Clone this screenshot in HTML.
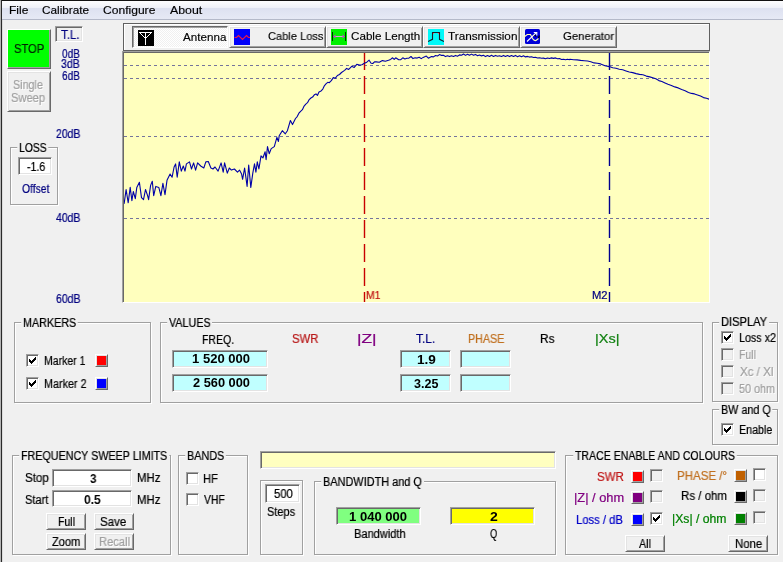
<!DOCTYPE html>
<html><head><meta charset="utf-8"><title>VNA</title>
<style>
html,body{margin:0;padding:0;}
body{width:783px;height:562px;overflow:hidden;background:#f0f0f0;position:relative;font-family:"Liberation Sans",sans-serif;font-size:12px;color:#000;}
.a{position:absolute;box-sizing:border-box;}
.t{will-change:transform;-webkit-text-stroke:0.22px;position:absolute;white-space:pre;line-height:1;transform-origin:0 50%;}
.cap{background:#f0f0f0;}
.dis{text-shadow:1px 1px 0 #fff;}
.raised{border:1px solid;border-color:#fff #696969 #696969 #fff;box-shadow:inset 1px 1px 0 #e3e3e3,inset -1px -1px 0 #a0a0a0;background:#f0f0f0;}
.sunken{border:1px solid;border-color:#a0a0a0 #fff #fff #a0a0a0;box-shadow:inset 1px 1px 0 #696969,inset -1px -1px 0 #e3e3e3;background:#fff;}
.thin-sunken{border:1px solid;border-color:#808080 #fff #fff #808080;}
.frame{border:1px solid #a0a0a0;box-shadow:1px 1px 0 #fff,inset 1px 1px 0 #fff;}
.cb{width:13px;height:13px;}
.cb.dis{background:#f0f0f0;}
.sw{width:13px;height:13px;border:1px solid;border-color:#fff #696969 #696969 #fff;box-shadow:inset 1px 1px 0 #e3e3e3,inset -1px -1px 0 #a0a0a0;}
</style></head><body>

<div class="a" style="left:0;top:0;width:783px;height:1px;background:#111"></div>
<div class="a" style="left:2px;top:1px;width:781px;height:18px;background:linear-gradient(#fdfdfe 0,#eff1f8 37%,#dde1f0 39%,#e6e9f5 100%)"></div>
<div class="a" style="left:2px;top:19px;width:781px;height:1px;background:#b4b9c9"></div>
<div class="a" style="left:0;top:0;width:1px;height:562px;background:#b4b4b4"></div>
<div class="a" style="left:1px;top:0;width:1px;height:562px;background:#2a2a2a"></div>
<div class="a" style="left:2px;top:20px;width:1px;height:542px;background:#dcdcdc"></div>
<div class="a raised" style="left:7px;top:29px;width:44px;height:40px;background:#00ff00;box-shadow:inset -1px -1px 0 #a0a0a0"></div>
<div class="a raised" style="left:7px;top:71px;width:44px;height:41px;"></div>
<div class="a sunken" style="left:55px;top:26px;width:28px;height:16px;background:#f0f0f0"></div>
<div class="a " style="left:123px;top:23px;width:587px;height:28px;border:1px solid #606060;box-shadow:inset 1px 1px 0 #fff;background:#f0f0f0"></div>
<div class="a " style="left:132px;top:26px;width:96px;height:22px;border:1px solid;border-color:#696969 #fff #fff #696969;box-shadow:inset 1px 1px 0 #a0a0a0;background:repeating-conic-gradient(#fff 0 25%,#f0f0f0 0 50%) 0 0/2px 2px"></div>
<div class="a raised" style="left:229px;top:26px;width:97px;height:22px;"></div>
<div class="a raised" style="left:326px;top:26px;width:97px;height:22px;"></div>
<div class="a raised" style="left:423px;top:26px;width:97px;height:22px;"></div>
<div class="a raised" style="left:520px;top:26px;width:97px;height:22px;"></div>
<svg class="a" style="left:138px;top:30px" width="16" height="16" viewBox="0 0 16 16" shape-rendering="crispEdges"><rect width="16" height="16" fill="#000"/><g fill="#fff"><rect x="1" y="2" width="13" height="1"/><rect x="7" y="2" width="1" height="13"/><rect x="1" y="2" width="1" height="1"/><rect x="13" y="2" width="1" height="1"/><rect x="2" y="3" width="1" height="1"/><rect x="12" y="3" width="1" height="1"/><rect x="3" y="4" width="1" height="1"/><rect x="11" y="4" width="1" height="1"/><rect x="4" y="5" width="1" height="1"/><rect x="10" y="5" width="1" height="1"/><rect x="5" y="6" width="1" height="1"/><rect x="9" y="6" width="1" height="1"/><rect x="6" y="7" width="1" height="1"/><rect x="8" y="7" width="1" height="1"/><rect x="7" y="8" width="1" height="1"/><rect x="7" y="8" width="1" height="1"/></g></svg>
<svg class="a" style="left:234px;top:29px" width="16" height="16" viewBox="0 0 16 16"><rect width="16" height="16" fill="#0000fa"/><path d="M0.5 8.5H2.5L4.5 6.5L8.5 10.5L12.5 6.5L14.5 8.5H16" stroke="#f01840" stroke-width="1.1" fill="none"/></svg>
<svg class="a" style="left:331px;top:29px" width="16" height="16" viewBox="0 0 16 16"><rect width="16" height="16" fill="#00f000"/><path d="M1.5 3V12M14.5 3V12" stroke="#003000" stroke-width="1" fill="none" shape-rendering="crispEdges"/><path d="M3 7.5H13" stroke="#d8a0d8" stroke-width="1" fill="none"/><path d="M2 7.5L4.5 5.5V9.5ZM14 7.5L11.5 5.5V9.5Z" fill="#c040c8"/></svg>
<svg class="a" style="left:428px;top:29px" width="16" height="16" viewBox="0 0 16 16"><rect width="16" height="16" fill="#00f8f8"/><path d="M0 12.5L2 11.5L4.5 10.3V3.5H11.5V10.3L14 11.5L16 12.5" stroke="#181828" stroke-width="1.1" fill="none"/><rect x="5" y="4" width="1" height="1" fill="#ff6060"/><rect x="10" y="4" width="1" height="1" fill="#ff6060"/></svg>
<svg class="a" style="left:524px;top:29px;overflow:visible" width="16" height="15" viewBox="-1 0 16 15"><rect width="15" height="15" rx="1.5" fill="#0000d8"/><path d="M8 6.5Q10 5.5 11 7.5M13.5 9.5L14.3 6.5" stroke="#000" stroke-width="1.2" fill="none"/><path d="M-1 8L2.3 5.5H5.5L7.5 9.5Q9 12 11 11.5L13.5 9.5" stroke="#ffffb0" stroke-width="1.2" fill="none"/><path d="M2 12.5L11.3 3.7M8.8 3.5H11.8V6.5" stroke="#fff" stroke-width="1.1" fill="none"/></svg>
<div class="a " style="left:122px;top:51px;width:588px;height:252px;border-style:solid;border-width:1px;border-color:#a0a0a0 #fff #fff #a0a0a0;box-shadow:inset 1px 1px 0 #686868;background:#ffffbe"></div>
<svg class="a" style="left:124px;top:53px" width="585" height="249" viewBox="124 53 585 249"><path d="M124 65.5H709" stroke="#74749c" stroke-width="1" stroke-dasharray="3 3" fill="none"/><path d="M124 78.5H709" stroke="#74749c" stroke-width="1" stroke-dasharray="3 3" fill="none"/><path d="M124 136.5H709" stroke="#74749c" stroke-width="1" stroke-dasharray="3 3" fill="none"/><path d="M124 218.5H709" stroke="#74749c" stroke-width="1" stroke-dasharray="3 3" fill="none"/><path d="M364.5 52V302" stroke="#c80000" stroke-width="1.4" stroke-dasharray="18 6" fill="none"/><path d="M609.5 52V302" stroke="#000090" stroke-width="1.4" stroke-dasharray="18 6" fill="none"/><path d="M124.1 203.8L126.1 189.5L128.2 202.8L130.2 187.4L131.9 200.7L133.3 191.5L135.3 198.7L136.8 187.4L139.4 182.3L141.5 197.6L143.5 199.7L145.5 189.5L147.6 195.6L148.6 199.7L150.6 185.4L152.3 181.3L153.7 195.6L155.8 186.4L158.8 187.4L160.9 195.6L162.9 183.3L165.0 194.6L167.0 180.3L170.1 174.1L172.1 177.2L174.1 167.0L175.6 163.9L177.2 177.2L179.3 161.9L181.3 171.1L183.3 166.0L185.0 171.1L186.4 163.9L189.5 161.9L191.5 169.0L193.6 162.9L195.6 170.1L197.6 162.9L200.7 166.0L203.8 168.0L205.8 161.9L208.3 161.5L210.9 168.0L213.0 169.0L215.0 167.0L218.1 171.1L221.1 162.9L223.2 172.1L224.6 162.9L227.3 173.1L229.3 168.0L231.4 170.1L234.4 169.0L237.5 172.1L239.5 170.1L241.6 174.1L242.6 179.3L244.6 168.0L247.1 186.4L248.7 165.0L250.8 187.4L252.8 173.1L254.5 163.9L255.9 172.1L257.3 161.9L258.9 169.0L261.0 155.8L263.0 157.8L265.1 151.7L266.1 159.8L267.5 146.6L269.2 153.7L271.2 148.6L274.3 146.6L276.9 137.4L278.4 141.5L279.2 135.8L282.3 130.7L285.3 133.8L287.4 130.7L290.4 120.5L292.5 124.6L295.5 118.5L297.2 116.6L298.9 113.2L300.6 111.3L302.4 109.7L304.1 106.1L305.8 104.1L307.5 102.7L309.2 99.6L310.9 98.0L312.6 97.1L314.3 94.8L316.0 93.9L317.4 95.4L319.0 91.9L321.1 90.9L322.8 89.1L324.5 85.6L326.2 83.7L327.8 82.3L329.3 82.7L331.3 80.6L333.3 77.6L335.4 78.2L337.4 75.5L339.5 74.5L341.5 72.5L344.6 70.4L346.6 68.4L348.7 69.4L351.7 66.3L354.2 67.4L356.8 64.3L359.5 65.1L361.9 64.7L364.4 63.3L366.8 62.2L369.1 60.2L371.1 63.3L372.8 63.5L374.5 61.8L376.3 61.9L379.3 62.3L382.4 60.6L385.4 61.2L388.5 60.2L390.6 59.4L392.6 57.8L394.2 59.4L395.7 57.8L398.7 59.8L400.8 59.6L402.8 57.8L404.9 59.0L406.9 58.2L408.9 58.1L411.0 56.5L413.0 58.6L415.1 57.8L417.1 58.1L419.2 57.2L421.2 58.6L423.2 57.4L426.3 56.1L428.4 58.2L431.5 56.6L433.5 56.9L435.5 55.5L437.5 56.0L439.5 54.6L441.5 55.4L443.5 55.2L445.5 56.6L447.5 55.8L449.5 56.6L451.5 55.7L453.5 56.4L455.5 55.4L457.5 56.2L459.5 54.9L461.5 55.3L463.5 54.0L465.5 55.4L467.5 54.2L469.5 55.3L471.5 54.1L473.5 55.3L475.5 54.4L477.5 55.7L479.5 55.0L481.5 55.9L483.5 55.3L485.5 56.6L487.5 55.5L489.5 56.5L491.5 55.3L493.5 56.4L495.5 55.4L497.5 56.3L499.5 55.7L501.5 56.4L503.5 55.4L505.5 56.5L507.5 55.6L509.5 56.6L511.5 55.5L513.5 56.5L515.5 55.4L517.5 56.7L519.5 55.7L521.5 56.8L523.5 55.8L525.5 56.9L527.5 56.4L529.5 57.1L531.5 56.8L533.5 57.5L535.5 57.3L537.5 58.0L539.5 57.7L541.5 58.3L543.5 58.1L545.5 58.7L547.5 58.0L549.5 58.5L551.5 57.9L553.5 58.4L555.5 57.9L557.5 58.8L559.5 58.6L561.5 59.5L563.5 59.2L565.5 59.8L567.5 59.2L569.5 59.7L570.0 59.2L573.6 59.7L577.1 59.9L580.7 60.4L584.3 60.7L587.6 61.0L590.8 61.7L594.1 62.9L597.3 63.2L600.6 63.9L605.0 65.7L609.4 66.6L612.7 67.7L616.0 68.3L619.3 69.2L622.7 69.8L626.0 70.9L629.3 72.0L632.7 72.6L636.1 73.6L639.5 74.4L642.9 74.8L646.3 76.1L649.7 76.9L652.8 77.8L655.8 78.8L658.9 80.6L661.9 81.5L665.0 82.9L668.0 84.2L671.4 85.4L674.8 86.9L678.2 87.9L681.7 89.6L685.1 90.7L688.5 92.4L691.5 93.4L694.5 93.9L697.5 94.9L700.5 96.0L703.5 97.6L706.5 98.2L709.5 99.3" stroke="#0000a8" stroke-width="1.1" fill="none" stroke-linejoin="round"/></svg>
<div class="a frame" style="left:10px;top:147px;width:48px;height:58px;"></div>
<div class="a sunken" style="left:18px;top:157px;width:34px;height:18px;"></div>
<div class="a frame" style="left:14px;top:322px;width:137px;height:81px;"></div>
<div class="a frame" style="left:160px;top:322px;width:543px;height:81px;"></div>
<div class="a frame" style="left:712px;top:322px;width:66px;height:80px;"></div>
<div class="a frame" style="left:712px;top:409px;width:66px;height:36px;"></div>
<div class="a frame" style="left:12px;top:455px;width:159px;height:100px;"></div>
<div class="a frame" style="left:178px;top:455px;width:70px;height:100px;"></div>
<div class="a frame" style="left:260px;top:480px;width:43px;height:75px;"></div>
<div class="a frame" style="left:314px;top:481px;width:242px;height:74px;"></div>
<div class="a frame" style="left:565px;top:455px;width:213px;height:100px;"></div>
<div class="a sunken cb" style="left:26px;top:354px"><svg width="13" height="13" viewBox="0 0 13 13" shape-rendering="crispEdges" style="position:absolute;left:-1px;top:-1px"><path d="M3 5h1v1h1v1h1v-1h1v-1h1v-1h1v-1h1v3h-1v1h-1v1h-1v1h-1v1h-1v-1h-1v-1h-1z" fill="#000"/></svg></div>
<div class="a sw" style="left:95px;top:354px;background:#ff0000"></div>
<div class="a sunken cb" style="left:26px;top:377px"><svg width="13" height="13" viewBox="0 0 13 13" shape-rendering="crispEdges" style="position:absolute;left:-1px;top:-1px"><path d="M3 5h1v1h1v1h1v-1h1v-1h1v-1h1v-1h1v3h-1v1h-1v1h-1v1h-1v1h-1v-1h-1v-1h-1z" fill="#000"/></svg></div>
<div class="a sw" style="left:95px;top:377px;background:#0000ff"></div>
<div class="a sunken cb" style="left:721px;top:331px"><svg width="13" height="13" viewBox="0 0 13 13" shape-rendering="crispEdges" style="position:absolute;left:-1px;top:-1px"><path d="M3 5h1v1h1v1h1v-1h1v-1h1v-1h1v-1h1v3h-1v1h-1v1h-1v1h-1v1h-1v-1h-1v-1h-1z" fill="#000"/></svg></div>
<div class="a sunken cb dis" style="left:721px;top:348px"></div>
<div class="a sunken cb dis" style="left:721px;top:365px"></div>
<div class="a sunken cb dis" style="left:721px;top:382px"></div>
<div class="a sunken cb" style="left:721px;top:423px"><svg width="13" height="13" viewBox="0 0 13 13" shape-rendering="crispEdges" style="position:absolute;left:-1px;top:-1px"><path d="M3 5h1v1h1v1h1v-1h1v-1h1v-1h1v-1h1v3h-1v1h-1v1h-1v1h-1v1h-1v-1h-1v-1h-1z" fill="#000"/></svg></div>
<div class="a sunken cb" style="left:186px;top:472px"></div>
<div class="a sunken cb" style="left:186px;top:493px"></div>
<div class="a sunken" style="left:172px;top:350px;width:96px;height:18px;background:#c0ffff"></div>
<div class="a sunken" style="left:400px;top:350px;width:51px;height:18px;background:#c0ffff"></div>
<div class="a sunken" style="left:460px;top:350px;width:51px;height:18px;background:#c0ffff"></div>
<div class="a sunken" style="left:172px;top:374px;width:96px;height:18px;background:#c0ffff"></div>
<div class="a sunken" style="left:400px;top:374px;width:51px;height:18px;background:#c0ffff"></div>
<div class="a sunken" style="left:460px;top:374px;width:51px;height:18px;background:#c0ffff"></div>
<div class="a sunken" style="left:52px;top:469px;width:80px;height:18px;"></div>
<div class="a sunken" style="left:52px;top:490px;width:80px;height:17px;"></div>
<div class="a raised" style="left:46px;top:513px;width:40px;height:17px;"></div>
<div class="a raised" style="left:94px;top:513px;width:40px;height:17px;"></div>
<div class="a raised" style="left:46px;top:533px;width:40px;height:17px;"></div>
<div class="a raised" style="left:94px;top:533px;width:40px;height:17px;"></div>
<div class="a sunken" style="left:260px;top:451px;width:296px;height:18px;background:#ffffc0"></div>
<div class="a sunken" style="left:265px;top:484px;width:35px;height:19px;"></div>
<div class="a sunken" style="left:336px;top:507px;width:85px;height:18px;background:#80ff80"></div>
<div class="a sunken" style="left:450px;top:507px;width:85px;height:18px;background:#ffff00"></div>
<div class="a sw" style="left:631px;top:470px;background:#ff0000"></div>
<div class="a sunken cb dis" style="left:650px;top:469px"></div>
<div class="a sw" style="left:631px;top:491px;background:#800080"></div>
<div class="a sunken cb dis" style="left:650px;top:490px"></div>
<div class="a sw" style="left:631px;top:513px;background:#0000ff"></div>
<div class="a sunken cb" style="left:650px;top:512px"><svg width="13" height="13" viewBox="0 0 13 13" shape-rendering="crispEdges" style="position:absolute;left:-1px;top:-1px"><path d="M3 5h1v1h1v1h1v-1h1v-1h1v-1h1v-1h1v3h-1v1h-1v1h-1v1h-1v1h-1v-1h-1v-1h-1z" fill="#000"/></svg></div>
<div class="a sw" style="left:734px;top:469px;background:#c06000"></div>
<div class="a sunken cb" style="left:753px;top:468px"></div>
<div class="a sw" style="left:734px;top:490px;background:#000000"></div>
<div class="a sunken cb dis" style="left:753px;top:489px"></div>
<div class="a sw" style="left:734px;top:512px;background:#008000"></div>
<div class="a sunken cb dis" style="left:753px;top:511px"></div>
<div class="a raised" style="left:625px;top:535px;width:40px;height:17px;"></div>
<div class="a raised" style="left:728px;top:535px;width:40px;height:17px;"></div>
<span class="t" style="left:8.6px;top:5px;font-size:11.5px;color:#000;transform:scaleX(1.041);-webkit-text-stroke:0.15px;">File</span>
<span class="t" style="left:41.5px;top:5px;font-size:11.5px;color:#000;transform:scaleX(1.024);-webkit-text-stroke:0.15px;">Calibrate</span>
<span class="t" style="left:102.5px;top:5px;font-size:11.5px;color:#000;transform:scaleX(1.050);-webkit-text-stroke:0.15px;">Configure</span>
<span class="t" style="left:169.8px;top:5px;font-size:11.5px;color:#000;transform:scaleX(1.073);-webkit-text-stroke:0.15px;">About</span>
<span class="t" style="left:182.5px;top:32px;font-size:11.5px;color:#000;transform:scaleX(1.012);-webkit-text-stroke:0.15px;">Antenna</span>
<span class="t" style="left:267.5px;top:31px;font-size:11.5px;color:#000;transform:scaleX(0.963);-webkit-text-stroke:0.15px;">Cable Loss</span>
<span class="t" style="left:350.7px;top:31px;font-size:11.5px;color:#000;transform:scaleX(1.013);-webkit-text-stroke:0.15px;">Cable Length</span>
<span class="t" style="left:448.0px;top:31px;font-size:11.5px;color:#000;transform:scaleX(1.022);-webkit-text-stroke:0.15px;">Transmission</span>
<span class="t" style="left:562.9px;top:31px;font-size:11.5px;color:#000;transform:scaleX(0.987);-webkit-text-stroke:0.15px;">Generator</span>
<span class="t" style="left:13.5px;top:43px;font-size:12px;color:#002000;transform:scaleX(0.932);">STOP</span>
<span class="t dis" style="left:12.7px;top:79px;font-size:12px;color:#a0a0a0;transform:scaleX(0.897);">Single</span>
<span class="t dis" style="left:10.6px;top:92px;font-size:12px;color:#a0a0a0;transform:scaleX(0.929);">Sweep</span>
<span class="t" style="left:61.0px;top:29px;font-size:12px;color:#000080;transform:scaleX(0.956);">T.L.</span>
<span class="t" style="left:61.7px;top:48px;font-size:12px;color:#000080;transform:scaleX(0.838);">0dB</span>
<span class="t" style="left:60.8px;top:58px;font-size:12px;color:#000080;transform:scaleX(0.880);">3dB</span>
<span class="t" style="left:61.7px;top:70px;font-size:12px;color:#000080;transform:scaleX(0.838);">6dB</span>
<span class="t" style="left:55.9px;top:128px;font-size:12px;color:#000080;transform:scaleX(0.870);">20dB</span>
<span class="t" style="left:55.9px;top:212px;font-size:12px;color:#000080;transform:scaleX(0.870);">40dB</span>
<span class="t" style="left:55.7px;top:293px;font-size:12px;color:#000080;transform:scaleX(0.874);">60dB</span>
<span class="t cap" style="left:18.7px;top:142px;font-size:12px;color:#000;transform:scaleX(0.861);padding:0 2px;margin-left:-2px;transform-origin:2px 50%;">LOSS</span>
<span class="t" style="left:26.9px;top:161px;font-size:12px;color:#000;transform:scaleX(0.880);">-1.6</span>
<span class="t" style="left:21.8px;top:183px;font-size:12px;color:#000080;transform:scaleX(0.862);">Offset</span>
<span class="t" style="left:365.7px;top:290px;font-size:11px;color:#c01010;transform:scaleX(0.943);">M1</span>
<span class="t" style="left:591.7px;top:290px;font-size:11px;color:#000080;transform:scaleX(1.021);">M2</span>
<span class="t cap" style="left:22.6px;top:317px;font-size:12px;color:#000;transform:scaleX(0.897);padding:0 2px;margin-left:-2px;transform-origin:2px 50%;">MARKERS</span>
<span class="t" style="left:43.8px;top:355px;font-size:12px;color:#000;transform:scaleX(0.874);">Marker 1</span>
<span class="t" style="left:43.8px;top:378px;font-size:12px;color:#000;transform:scaleX(0.898);">Marker 2</span>
<span class="t cap" style="left:169.2px;top:317px;font-size:12px;color:#000;transform:scaleX(0.896);padding:0 2px;margin-left:-2px;transform-origin:2px 50%;">VALUES</span>
<span class="t" style="left:201.6px;top:334px;font-size:12px;color:#000;transform:scaleX(0.877);">FREQ.</span>
<span class="t" style="left:291.8px;top:333px;font-size:12px;color:#b81818;transform:scaleX(0.946);">SWR</span>
<span class="t" style="left:357.1px;top:333px;font-size:12px;color:#800080;transform:scaleX(1.442);">|Z|</span>
<span class="t" style="left:416.2px;top:333px;font-size:12px;color:#000080;transform:scaleX(0.989);">T.L.</span>
<span class="t" style="left:467.5px;top:333px;font-size:12px;color:#c07020;transform:scaleX(0.892);">PHASE</span>
<span class="t" style="left:539.7px;top:333px;font-size:12px;color:#000;transform:scaleX(0.985);">Rs</span>
<span class="t" style="left:594.6px;top:333px;font-size:12px;color:#108010;transform:scaleX(1.206);">|Xs|</span>
<span class="t" style="left:191.9px;top:353px;font-size:12px;color:#000;transform:scaleX(1.087);-webkit-text-stroke:0;font-weight:bold;">1 520 000</span>
<span class="t" style="left:193.0px;top:377px;font-size:12px;color:#000;transform:scaleX(1.066);-webkit-text-stroke:0;font-weight:bold;">2 560 000</span>
<span class="t" style="left:417.1px;top:354px;font-size:12px;color:#000;transform:scaleX(1.133);-webkit-text-stroke:0;font-weight:bold;">1.9</span>
<span class="t" style="left:414.1px;top:378px;font-size:12px;color:#000;transform:scaleX(1.043);-webkit-text-stroke:0;font-weight:bold;">3.25</span>
<span class="t cap" style="left:720.7px;top:316px;font-size:12px;color:#000;transform:scaleX(0.925);padding:0 2px;margin-left:-2px;transform-origin:2px 50%;">DISPLAY</span>
<span class="t" style="left:738.9px;top:332px;font-size:12px;color:#000;transform:scaleX(0.893);">Loss x2</span>
<span class="t dis" style="left:738.8px;top:349px;font-size:12px;color:#a0a0a0;transform:scaleX(0.872);">Full</span>
<span class="t dis" style="left:739.7px;top:366px;font-size:12px;color:#a0a0a0;transform:scaleX(0.965);">Xc / Xl</span>
<span class="t dis" style="left:738.8px;top:383px;font-size:12px;color:#a0a0a0;transform:scaleX(0.900);">50 ohm</span>
<span class="t cap" style="left:720.5px;top:404px;font-size:12px;color:#000;transform:scaleX(0.900);padding:0 2px;margin-left:-2px;transform-origin:2px 50%;">BW and Q</span>
<span class="t" style="left:739.1px;top:424px;font-size:12px;color:#000;transform:scaleX(0.889);">Enable</span>
<span class="t cap" style="left:20.6px;top:450px;font-size:12px;color:#000;transform:scaleX(0.894);padding:0 2px;margin-left:-2px;transform-origin:2px 50%;">FREQUENCY SWEEP LIMITS</span>
<span class="t" style="left:25.3px;top:472px;font-size:12px;color:#000;transform:scaleX(0.965);">Stop</span>
<span class="t" style="left:25.4px;top:494px;font-size:12px;color:#000;transform:scaleX(0.925);">Start</span>
<span class="t" style="left:136.8px;top:472px;font-size:12px;color:#000;transform:scaleX(0.948);">MHz</span>
<span class="t" style="left:136.8px;top:494px;font-size:12px;color:#000;transform:scaleX(0.948);">MHz</span>
<span class="t" style="left:89.9px;top:472px;font-size:13px;color:#000;transform:scaleX(0.900);-webkit-text-stroke:0;font-weight:bold;">3</span>
<span class="t" style="left:84.0px;top:493px;font-size:13px;color:#000;transform:scaleX(0.928);-webkit-text-stroke:0;font-weight:bold;">0.5</span>
<span class="t" style="left:57.7px;top:516px;font-size:12px;color:#000;transform:scaleX(0.878);">Full</span>
<span class="t" style="left:100.4px;top:516px;font-size:12px;color:#000;transform:scaleX(0.958);">Save</span>
<span class="t" style="left:51.7px;top:536px;font-size:12px;color:#000;transform:scaleX(0.920);">Zoom</span>
<span class="t dis" style="left:98.7px;top:536px;font-size:12px;color:#a0a0a0;transform:scaleX(0.931);">Recall</span>
<span class="t cap" style="left:186.8px;top:450px;font-size:12px;color:#000;transform:scaleX(0.903);padding:0 2px;margin-left:-2px;transform-origin:2px 50%;">BANDS</span>
<span class="t" style="left:203.4px;top:473px;font-size:12px;color:#000;transform:scaleX(0.927);">HF</span>
<span class="t" style="left:204.0px;top:494px;font-size:12px;color:#000;transform:scaleX(0.862);">VHF</span>
<span class="t" style="left:273.7px;top:488px;font-size:12px;color:#000;transform:scaleX(0.942);">500</span>
<span class="t" style="left:266.8px;top:506px;font-size:12px;color:#000;transform:scaleX(0.914);">Steps</span>
<span class="t cap" style="left:323.0px;top:476px;font-size:12px;color:#000;transform:scaleX(0.910);padding:0 2px;margin-left:-2px;transform-origin:2px 50%;">BANDWIDTH and Q</span>
<span class="t" style="left:349.4px;top:511px;font-size:12px;color:#000;transform:scaleX(1.087);-webkit-text-stroke:0;font-weight:bold;">1 040 000</span>
<span class="t" style="left:353.9px;top:528px;font-size:12px;color:#000;transform:scaleX(0.922);">Bandwidth</span>
<span class="t" style="left:489.5px;top:511px;font-size:12px;color:#000;transform:scaleX(1.167);-webkit-text-stroke:0;font-weight:bold;">2</span>
<span class="t" style="left:489.8px;top:528px;font-size:12px;color:#000;transform:scaleX(0.778);">Q</span>
<span class="t cap" style="left:575.3px;top:450px;font-size:12px;color:#000;transform:scaleX(0.879);padding:0 2px;margin-left:-2px;transform-origin:2px 50%;">TRACE ENABLE AND COLOURS</span>
<span class="t" style="left:596.6px;top:471px;font-size:12px;color:#c01818;transform:scaleX(0.962);">SWR</span>
<span class="t" style="left:574.2px;top:492px;font-size:12px;color:#800080;transform:scaleX(1.067);">|Z| / ohm</span>
<span class="t" style="left:576.1px;top:514px;font-size:12px;color:#0000c8;transform:scaleX(0.938);">Loss / dB</span>
<span class="t" style="left:677.3px;top:470px;font-size:12px;color:#c07020;transform:scaleX(0.960);">PHASE /°</span>
<span class="t" style="left:680.9px;top:490px;font-size:12px;color:#000;transform:scaleX(0.957);">Rs / ohm</span>
<span class="t" style="left:672.0px;top:513px;font-size:12px;color:#008000;transform:scaleX(1.017);">|Xs| / ohm</span>
<span class="t" style="left:638.9px;top:538px;font-size:12px;color:#000;transform:scaleX(0.892);">All</span>
<span class="t" style="left:734.6px;top:538px;font-size:12px;color:#000;transform:scaleX(0.948);">None</span>
</body></html>
